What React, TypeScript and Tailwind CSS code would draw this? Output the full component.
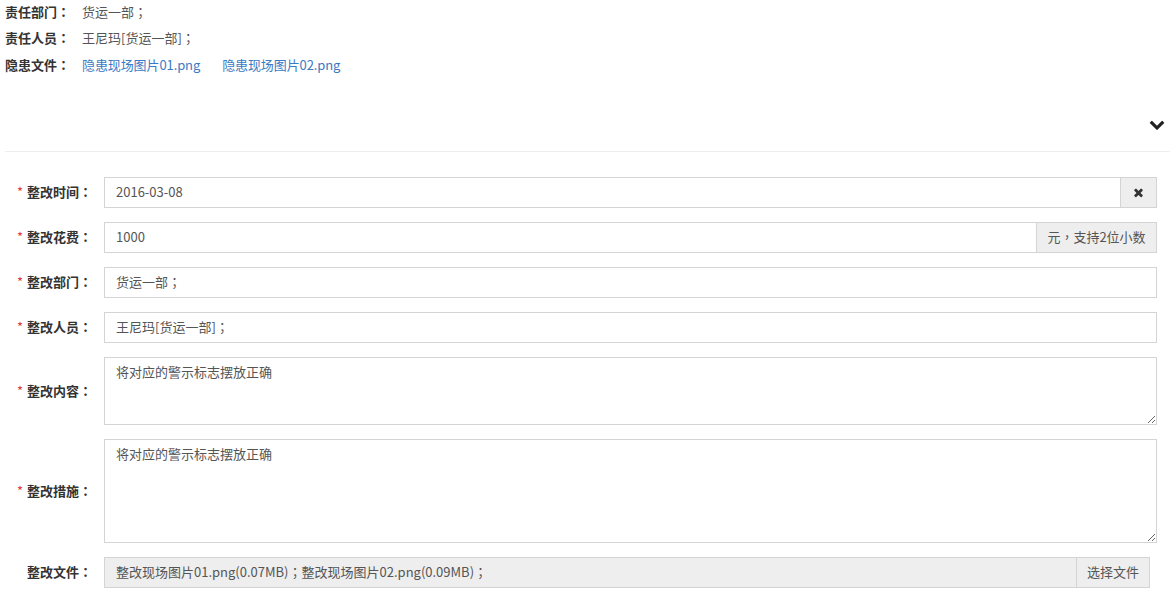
import React from "react";

const font = { fontFamily: '"Noto Sans CJK SC", "Noto Sans", sans-serif' };
const tc = { fontFamily: '"Noto Sans CJK TC", "Noto Sans CJK SC", sans-serif' };

function P({ c }: { c: string }) {
  return <span style={tc}>{c}</span>;
}

function Label({ text, required = true }: { text: string; required?: boolean }) {
  return (
    <div className="w-[92px] shrink-0 flex items-center justify-end text-[13px] font-bold text-[#333]">
      {required && <span className="text-[#e4393c] mr-[4px] font-normal">*</span>}
      <span>
        {text}
        <P c="：" />
      </span>
    </div>
  );
}

function Row({ children, label, required = true, h = "h-[31px]" }: { children: React.ReactNode; label: string; required?: boolean; h?: string }) {
  return (
    <div className={`flex ${h} gap-[12px]`}>
      <Label text={label} required={required} />
      {children}
    </div>
  );
}

export default function App() {
  return (
    <div className="w-[1170px] h-[600px] bg-white text-[13px] text-[#333] overflow-hidden" style={font}>
      <div className="pl-[5px] -mt-[2px]">
        <div className="flex items-center h-[26.5px]">
          <span className="w-[77px] font-bold text-[13px]">
            责任部门<P c="：" />
          </span>
          <span className="text-[#555]">
            货运一部<P c="；" />
          </span>
        </div>
        <div className="flex items-center h-[26.5px]">
          <span className="w-[77px] font-bold text-[13px]">
            责任人员<P c="：" />
          </span>
          <span className="text-[#555]">
            王尼玛[货运一部]<P c="；" />
          </span>
        </div>
        <div className="flex items-center h-[26.5px]">
          <span className="w-[77px] font-bold text-[13px]">
            隐患文件<P c="：" />
          </span>
          <span className="text-[#3b7ac4] mr-[22px] tracking-[-0.1px]">隐患现场图片01.png</span>
          <span className="text-[#3b7ac4] tracking-[-0.1px]">隐患现场图片02.png</span>
        </div>
      </div>
      <div className="flex justify-end items-center h-[73px] pr-[5px]">
        <svg width="16" height="16" viewBox="0 0 1792 1792" className="mt-[19px]">
          <path
            fill="#222"
            d="M1683 808l-742 741q-19 19-45 19t-45-19l-742-741q-19-19-19-45.5t19-45.5l166-165q19-19 45-19t45 19l531 531 531-531q19-19 45-19t45 19l166 165q19 19 19 45.5t-19 45.5z"
          />
        </svg>
      </div>
      <div className="ml-[5px] border-t border-[#eeeeee]" />
      <div className="flex flex-col gap-[14px] pt-[25px] pr-[13px]">
        <Row label="整改时间">
          <div className="flex flex-1 border border-[#d4d4d4]">
            <div className="flex-1 flex items-center px-[11px] text-[#555] text-[13px]">2016-03-08</div>
            <div className="w-[36px] flex items-center justify-center bg-[#eeeeee] border-l border-[#d4d4d4]">
              <svg width="11" height="13" viewBox="0 0 1408 1792">
                <path
                  fill="#333"
                  d="M1298 1322q0 40-28 68l-136 136q-28 28-68 28t-68-28l-294-294-294 294q-28 28-68 28t-68-28l-136-136q-28-28-28-68t28-68l294-294-294-294q-28-28-28-68t28-68l136-136q28-28 68-28t68 28l294 294 294-294q28-28 68-28t68 28l136 136q28 28 28 68t-28 68l-294 294 294 294q28 28 28 68z"
                />
              </svg>
            </div>
          </div>
        </Row>
        <Row label="整改花费">
          <div className="flex flex-1 border border-[#d4d4d4]">
            <div className="flex-1 flex items-center px-[11px] text-[#555]">1000</div>
            <div className="w-[120px] flex items-center justify-center bg-[#eeeeee] border-l border-[#d4d4d4] text-[#555]">
              元<P c="，" />支持2位小数
            </div>
          </div>
        </Row>
        <Row label="整改部门">
          <div className="flex flex-1 items-center border border-[#d4d4d4] px-[11px] text-[#555]">
            货运一部<P c="；" />
          </div>
        </Row>
        <Row label="整改人员">
          <div className="flex flex-1 items-center border border-[#d4d4d4] px-[11px] text-[#555]">
            王尼玛[货运一部]<P c="；" />
          </div>
        </Row>
        <Row label="整改内容" h="h-[68px]">
          <textarea
            className="flex-1 border border-[#d4d4d4] px-[11px] pt-[4px] text-[13px] text-[#555] outline-none resize-y"
            style={font}
            defaultValue="将对应的警示标志摆放正确"
          />
        </Row>
        <Row label="整改措施" h="h-[104px]">
          <textarea
            className="flex-1 border border-[#d4d4d4] px-[11px] pt-[4px] text-[13px] text-[#555] outline-none resize-y"
            style={font}
            defaultValue="将对应的警示标志摆放正确"
          />
        </Row>
        <div className="flex h-[31px] gap-[12px] pr-[7px]">
          <Label text="整改文件" required={false} />
          <div className="flex flex-1 border border-[#d4d4d4] bg-[#eeeeee]">
            <div className="flex-1 flex items-center px-[11px] text-[#555]">
              整改现场图片01.png(0.07MB)<P c="；" />整改现场图片02.png(0.09MB)<P c="；" />
            </div>
            <div className="w-[73px] flex items-center justify-center border-l border-[#d4d4d4] text-[#555]">选择文件</div>
          </div>
        </div>
      </div>
    </div>
  );
}
